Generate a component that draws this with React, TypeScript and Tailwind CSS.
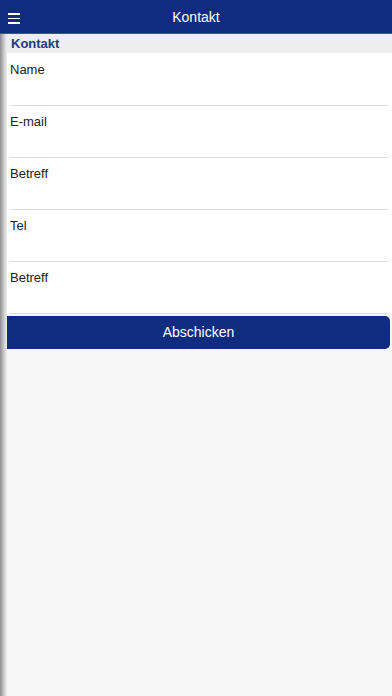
const fields = ['Name', 'E-mail', 'Betreff', 'Tel', 'Betreff'];

export default function App() {
  return (
    <div
      className="w-[392px] h-[696px] flex flex-col bg-[#f7f6f7] overflow-hidden"
      style={{ fontFamily: '"Helvetica Neue", "Liberation Sans", Arial, sans-serif' }}
    >
      {/* Header */}
      <div className="h-[34px] shrink-0 bg-[#0f2c80] border-b border-[#3a55a0] flex items-center relative">
        <button className="absolute left-[8px] top-[13px] flex flex-col gap-[3px]">
          <span className="block w-[12px] h-[1.5px] bg-white" />
          <span className="block w-[12px] h-[1.5px] bg-white" />
          <span className="block w-[12px] h-[1.5px] bg-white" />
        </button>
        <div className="flex-1 text-center text-white text-[14px] pt-[1px]">Kontakt</div>
      </div>

      <div className="flex-1 flex">
        {/* side shadow */}
        <div className="w-[7px] shrink-0 bg-gradient-to-r from-[#8e8e8e] via-[#c4c4c4] to-[#f2f2f2]" />

        <div className="flex-1 flex flex-col">
          <div className="h-[19px] bg-[#efeeef] flex items-start pt-[3px] pl-[4px]">
            <span className="text-[13px] font-bold text-[#1c3a86] leading-none">Kontakt</span>
          </div>

          <div className="bg-white pl-[3px] pr-[4px]">
            {fields.map((f, i) => (
              <div key={i} className={`${i === 0 ? 'h-[53px] pt-[4px]' : 'h-[52px] pt-[3px]'} border-b border-[#dcdcdc]`}>
                <span className="text-[13px] text-[#222]">{f}</span>
              </div>
            ))}
          </div>

          <button className="mt-[2px] mr-[2px] h-[33px] bg-[#0f2c80] rounded-r-[5px] text-white text-[14px]">
            Abschicken
          </button>
        </div>
      </div>
    </div>
  );
}
